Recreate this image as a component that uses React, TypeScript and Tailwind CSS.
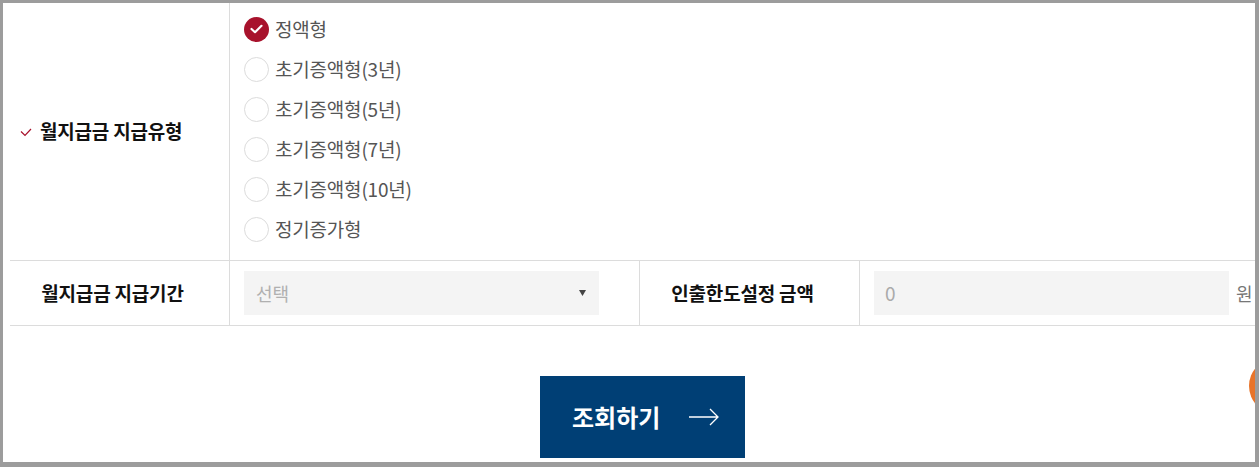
import React from "react";

const font = { fontFamily: '"Noto Sans CJK KR", "Noto Sans", sans-serif' };

const options = ["정액형", "초기증액형(3년)", "초기증액형(5년)", "초기증액형(7년)", "초기증액형(10년)", "정기증가형"];

export default function App() {
  return (
    <div className="w-[1259px] h-[467px] bg-[#9c9c9c] pt-[3px] pl-[3px] pr-[4px] pb-[5px]" style={font}>
      <div className="relative h-full w-full overflow-hidden bg-white pl-[7px]">
        {/* Row 1 */}
        <div className="flex h-[258px] border-b border-[#dcdcdc]">
          <div className="flex w-[220px] items-center border-r border-[#dcdcdc] pl-[10px]">
            <svg width="12" height="9" viewBox="0 0 12 9" className="mr-[8px] mt-[1px]">
              <path d="M1 3.5 L5 7.5 L11 1" fill="none" stroke="#a8122c" strokeWidth="1.2" />
            </svg>
            <span className="text-[19px] font-bold text-[#111] tracking-[-0.2px]">월지급금 지급유형</span>
          </div>
          <div className="flex flex-col pl-[14px] pt-[6px]">
            {options.map((o, i) => (
              <div key={o} className="flex h-[40px] items-center">
                {i === 0 ? (
                  <span className="flex h-[25px] w-[25px] items-center justify-center rounded-full bg-[#a8122c]">
                    <svg width="13" height="10" viewBox="0 0 13 10">
                      <path d="M1.5 5 L5 8.2 L11.5 1.8" fill="none" stroke="#fff" strokeWidth="2.2" strokeLinecap="round" strokeLinejoin="round" />
                    </svg>
                  </span>
                ) : (
                  <span className="h-[25px] w-[25px] rounded-full border border-[#dcdcdc] bg-white" />
                )}
                <span className="ml-[6px] text-[19px] text-[#555] tracking-[-0.2px]">{o}</span>
              </div>
            ))}
          </div>
        </div>
        {/* Row 2 */}
        <div className="flex h-[65px] border-b border-[#dcdcdc]">
          <div className="flex w-[220px] items-center justify-center border-r border-[#dcdcdc] pr-[14px]">
            <span className="text-[19px] font-bold text-[#111] tracking-[-0.2px]">월지급금 지급기간</span>
          </div>
          <div className="flex w-[410px] items-center border-r border-[#dcdcdc] pl-[14px]">
            <div className="flex h-[44px] w-[355px] items-center justify-between bg-[#f4f4f4] pl-[12px] pr-[13px]">
              <span className="text-[18px] text-[#b0b0b0]">선택</span>
              <svg width="7" height="6" viewBox="0 0 7 6">
                <path d="M0 0 H7 L3.5 6 Z" fill="#444" />
              </svg>
            </div>
          </div>
          <div className="flex w-[220px] items-center justify-center border-r border-[#dcdcdc] pr-[14px]">
            <span className="text-[19px] font-bold text-[#111] tracking-[-0.2px]">인출한도설정 금액</span>
          </div>
          <div className="flex flex-1 items-center pl-[14px]">
            <div className="flex h-[44px] w-[355px] items-center bg-[#f4f4f4] pl-[11px]">
              <span className="text-[19px] text-[#aaa]">0</span>
            </div>
            <span className="ml-[7px] text-[18px] text-[#777]">원</span>
          </div>
        </div>
        {/* Button */}
        <div className="mt-[50px] flex">
          <div className="ml-[530px] flex h-[82px] w-[205px] items-center bg-[#003f75] pl-[32px]">
            <span className="text-[24px] font-bold text-white">조회하기</span>
            <svg width="32" height="18" viewBox="0 0 32 18" className="ml-[28px]">
              <path d="M1 9 H30 M22 1 L30 9 L22 17" fill="none" stroke="#fff" strokeWidth="1.3" />
            </svg>
          </div>
        </div>
        {/* floating clipped buttons */}
        <div className="absolute left-[1246px] top-[355px] h-[56px] w-[56px] rounded-full bg-[#e8742a]" />
        <div className="absolute left-[1247px] top-[449px] h-[56px] w-[56px] rounded-full bg-[#2f73d6]" />
      </div>
    </div>
  );
}
